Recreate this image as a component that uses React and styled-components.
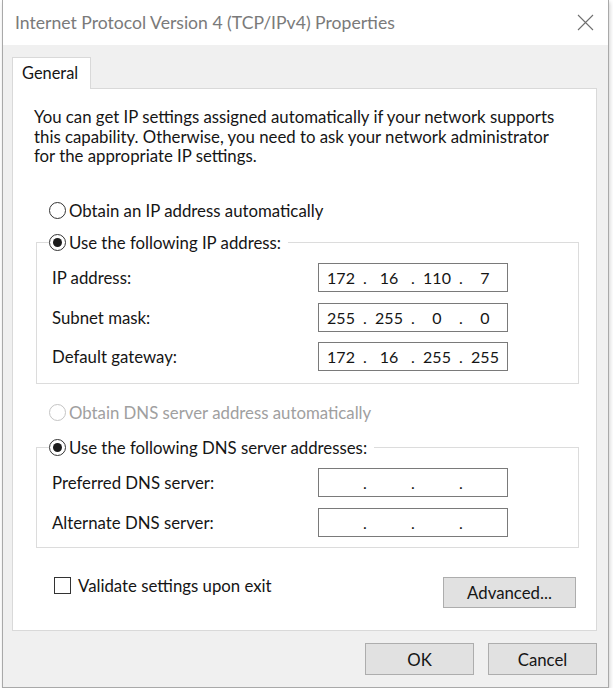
import React from 'react';
import styled, { createGlobalStyle } from 'styled-components';

const GlobalStyle = createGlobalStyle`
  html, body {
    margin: 0;
    padding: 0;
    background: #ffffff;
  }
  body {
    font-family: Lato, 'Open Sans', sans-serif;
    color: #151515;
  }
`;

const Window = styled.div`
  box-sizing: border-box;
  width: 607px;
  height: 688px;
  margin-left: 2px;
  border: 1px solid #a9a9a9;
  border-top: none;
  background: #f0f0f0;
  display: flex;
  flex-direction: column;
  box-shadow: 1px 2px 4px rgba(0, 0, 0, 0.18);
`;

const TitleBar = styled.div`
  height: 45px;
  flex: none;
  background: #ffffff;
  display: flex;
  align-items: center;
  justify-content: space-between;
  padding: 0 14px 0 12px;
`;

const TitleText = styled.span`
  font-size: 17.6px;
  color: #7a7a7a;
`;

const CloseIcon = styled.svg`
  width: 17px;
  height: 17px;
  display: block;
`;

const Body = styled.div`
  flex: 1;
  display: flex;
  flex-direction: column;
  padding: 12px 11px 0 9px;
`;

const TabStrip = styled.div`
  display: flex;
`;

const Tab = styled.div`
  position: relative;
  z-index: 1;
  box-sizing: border-box;
  width: 79px;
  height: 32px;
  margin-bottom: -1px;
  padding: 5px 0 0 9px;
  background: #ffffff;
  border: 1px solid #d9d9d9;
  border-bottom: none;
  font-size: 16.4px;
`;

const Panel = styled.div`
  box-sizing: border-box;
  height: 543px;
  background: #ffffff;
  border: 1px solid #d9d9d9;
  padding: 18px 17px 0 21px;
  display: flex;
  flex-direction: column;
`;

const Intro = styled.p`
  margin: 0;
  font-size: 16.8px;
  line-height: 19.5px;
`;

const RadioRow = styled.label`
  display: flex;
  align-items: center;
  gap: 3px;
  height: 20px;
  margin: ${(p) => p.$top || 0}px 0 0 ${(p) => p.$left || 0}px;
  font-size: 16.8px;
  color: ${(p) => (p.$disabled ? '#a0a0a0' : '#151515')};
`;

const RadioCircle = styled.span`
  box-sizing: border-box;
  width: 17px;
  height: 17px;
  border-radius: 50%;
  border: 1px solid ${(p) => (p.$disabled ? '#c4c4c4' : '#333333')};
  background: #ffffff;
  display: flex;
  align-items: center;
  justify-content: center;
  flex: none;

  &::after {
    content: '';
    width: 9px;
    height: 9px;
    border-radius: 50%;
    background: ${(p) => (p.$checked ? '#1b1b1b' : 'transparent')};
  }
`;

const Group = styled.fieldset`
  margin: ${(p) => p.$top}px 0 0 2px;
  padding: 11px 0 ${(p) => p.$bottom}px 15px;
  border: 1px solid #dcdcdc;
  min-width: 0;
`;

const Legend = styled.legend`
  padding: 0 7px 0 0;
  margin-left: -3px;
`;

const FieldRow = styled.div`
  display: grid;
  grid-template-columns: 266px 190px;
  align-items: center;
  height: 29px;
  font-size: 16.8px;

  & + & {
    margin-top: 10.5px;
  }
`;

const IpBox = styled.div`
  box-sizing: border-box;
  width: 190px;
  height: 29px;
  border: 1px solid #7a7a7a;
  display: grid;
  grid-template-columns: 1fr 4px 1fr 4px 1fr 4px 1fr;
  align-items: center;
  font-size: 16px;
`;

const Octet = styled.span`
  text-align: center;
`;

const Dot = styled.span`
  text-align: center;
`;

const BottomRow = styled.div`
  display: flex;
  justify-content: space-between;
  align-items: flex-start;
  margin-top: 29px;
  padding-right: 3px;
`;

const CheckLabel = styled.label`
  display: flex;
  align-items: center;
  gap: 7px;
  margin-left: 20px;
  font-size: 16.8px;
  height: 18px;
`;

const CheckBox = styled.span`
  box-sizing: border-box;
  width: 17px;
  height: 17px;
  border: 1px solid #333333;
  background: #ffffff;
`;

const Button = styled.button`
  box-sizing: border-box;
  width: ${(p) => p.$width}px;
  height: ${(p) => p.$height}px;
  background: #e1e1e1;
  border: 1px solid #adadad;
  border-radius: 0;
  font-family: inherit;
  font-size: 16.8px;
  color: #151515;
  padding: 0;
`;

const Footer = styled.div`
  display: flex;
  justify-content: flex-end;
  gap: 14px;
  padding: 12px 0 0 0;
`;

function Radio({ checked, disabled, children, top, left }) {
  return (
    <RadioRow $top={top} $left={left} $disabled={disabled}>
      <RadioCircle $checked={checked} $disabled={disabled} />
      {children}
    </RadioRow>
  );
}

function IpField({ value }) {
  const parts = value ? value.split('.') : ['', '', '', ''];
  return (
    <IpBox>
      {parts.map((part, i) => (
        <React.Fragment key={i}>
          {i > 0 && <Dot>.</Dot>}
          <Octet>{part}</Octet>
        </React.Fragment>
      ))}
    </IpBox>
  );
}

const ipRows = [
  { label: 'IP address:', value: '172.16.110.7' },
  { label: 'Subnet mask:', value: '255.255.0.0' },
  { label: 'Default gateway:', value: '172.16.255.255' },
];

const dnsRows = [
  { label: 'Preferred DNS server:', value: '' },
  { label: 'Alternate DNS server:', value: '' },
];

export default function App() {
  return (
    <>
      <GlobalStyle />
      <Window>
        <TitleBar>
          <TitleText>Internet Protocol Version 4 (TCP/IPv4) Properties</TitleText>
          <CloseIcon viewBox="0 0 17 17">
            <path d="M1 1 L16 16 M16 1 L1 16" stroke="#6f6f6f" strokeWidth="1.1" fill="none" />
          </CloseIcon>
        </TitleBar>
        <Body>
          <TabStrip>
            <Tab>General</Tab>
          </TabStrip>
          <Panel>
            <Intro>
              You can get IP settings assigned automatically if your network supports<br />
              this capability. Otherwise, you need to ask your network administrator<br />
              for the appropriate IP settings.
            </Intro>

            <Radio top={34.5} left={15}>Obtain an IP address automatically</Radio>
            <Group $top={12} $bottom={12}>
              <Legend>
                <Radio checked>Use the following IP address:</Radio>
              </Legend>
              {ipRows.map((row) => (
                <FieldRow key={row.label}>
                  <span>{row.label}</span>
                  <IpField value={row.value} />
                </FieldRow>
              ))}
            </Group>

            <Radio top={18} left={15} disabled>Obtain DNS server address automatically</Radio>
            <Group $top={15} $bottom={10}>
              <Legend>
                <Radio checked>Use the following DNS server addresses:</Radio>
              </Legend>
              {dnsRows.map((row) => (
                <FieldRow key={row.label}>
                  <span>{row.label}</span>
                  <IpField value={row.value} />
                </FieldRow>
              ))}
            </Group>

            <BottomRow>
              <CheckLabel>
                <CheckBox />
                Validate settings upon exit
              </CheckLabel>
              <Button $width={133} $height={31}>Advanced...</Button>
            </BottomRow>
          </Panel>
          <Footer>
            <Button $width={109} $height={32}>OK</Button>
            <Button $width={109} $height={32}>Cancel</Button>
          </Footer>
        </Body>
      </Window>
    </>
  );
}
